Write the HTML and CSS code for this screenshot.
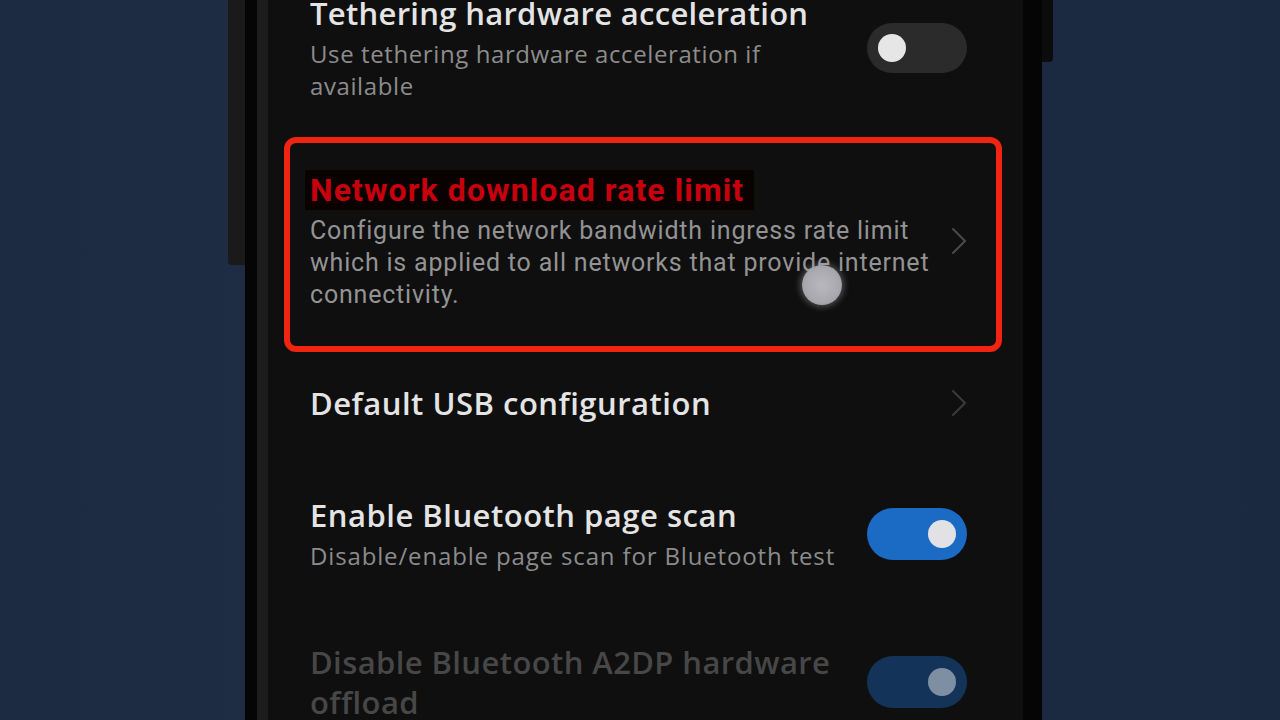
FILE: index.html
```html
<!DOCTYPE html>
<html lang="en">
<head>
  <meta charset="UTF-8">
  <title>Developer options</title>
  <link rel="stylesheet" href="styles.css">
</head>
<body>

  <div class="stage">
    <div class="phone">
      <div class="side-key side-key-left"></div>
      <div class="side-key side-key-right"></div>

      <div class="screen">
        <div class="settings-list">

          <div class="setting-row first">
            <div class="setting-text">
              <div class="setting-title tight">Tethering hardware acceleration</div>
              <div class="setting-summary">Use tethering hardware acceleration if<br>available</div>
            </div>
            <div class="switch"><span class="knob"></span></div>
          </div>

          <div class="highlight-box">
            <div class="setting-row boxed">
              <div class="setting-text">
                <div class="setting-title marked">Network download rate limit</div>
                <div class="setting-summary narrow">Configure the network bandwidth ingress rate limit<br>which is applied to all networks that provide internet<br>connectivity.</div>
              </div>
              <div class="chevron">
                <svg width="16" height="28" viewBox="0 0 16 28"><path d="M2 2 L14 14 L2 26" fill="none" stroke="#4a4a4a" stroke-width="2" stroke-linecap="round" stroke-linejoin="round"/></svg>
              </div>
            </div>
            <div class="touch-dot"></div>
          </div>

          <div class="setting-row usb">
            <div class="setting-text">
              <div class="setting-title">Default USB configuration</div>
            </div>
            <div class="chevron">
              <svg width="16" height="28" viewBox="0 0 16 28"><path d="M2 2 L14 14 L2 26" fill="none" stroke="#3a3a3a" stroke-width="2" stroke-linecap="round" stroke-linejoin="round"/></svg>
            </div>
          </div>

          <div class="setting-row">
            <div class="setting-text">
              <div class="setting-title">Enable Bluetooth page scan</div>
              <div class="setting-summary wide">Disable/enable page scan for Bluetooth test</div>
            </div>
            <div class="switch on"><span class="knob"></span></div>
          </div>

          <div class="setting-row disabled">
            <div class="setting-text">
              <div class="setting-title">Disable Bluetooth A2DP hardware<br>offload</div>
            </div>
            <div class="switch on dim"><span class="knob"></span></div>
          </div>

        </div>
      </div>
    </div>
  </div>

</body>
</html>
```

FILE: styles.css
```css
body {
  margin: 0;
  background: #1d2a40;
  font-family: "Open Sans", Roboto, sans-serif;
  overflow: hidden;
}

.stage {
  height: 720px;
  display: flex;
  padding-left: 245px;
  background: linear-gradient(90deg, #1c2a42 0%, #1f2c44 30%, #1b2940 100%);
}

.phone {
  position: relative;
  width: 797px;
  height: 720px;
  background: #050505;
  padding: 0 19px 0 12px;
  box-sizing: border-box;
}

.side-key {
  position: absolute;
  background: #1a1a1a;
}

.side-key-left {
  left: -17px;
  top: 0;
  width: 17px;
  height: 265px;
  border-radius: 0 0 0 4px;
}

.side-key-right {
  right: -11px;
  top: 0;
  width: 11px;
  height: 62px;
  border-radius: 0 0 4px 0;
  background: #0c0c0c;
}

.screen {
  height: 100%;
  background: #0f0f0f;
  border-left: 11px solid #1c1c1c;
  overflow: hidden;
}

.settings-list {
  margin-top: -42px;
}

.setting-row {
  display: flex;
  align-items: center;
  padding: 35px 56px 35px 42px;
}

.setting-text {
  flex: 1;
}

.setting-title {
  color: #e4e4e4;
  font-size: 31px;
  font-weight: 600;
  line-height: 40px;
  letter-spacing: 0.5px;
}

.setting-title.tight {
  letter-spacing: 0.3px;
}

.setting-summary {
  color: #8c8c8c;
  font-size: 24px;
  line-height: 32px;
  margin-top: 5px;
  letter-spacing: 0.6px;
}

.setting-summary.wide {
  letter-spacing: 0.85px;
}

.setting-row.usb {
  padding-top: 31px;
  padding-bottom: 37px;
}

.setting-row.disabled .setting-title {
  color: #474747;
  letter-spacing: 0.4px;
}

.highlight-box {
  position: relative;
  margin: 0 21px 0 16px;
  border: 6px solid #f02410;
  border-radius: 12px;
}

.setting-row.boxed {
  padding: 27px 29px 35px 20px;
}

.setting-title.marked {
  display: inline-block;
  font-family: Roboto, sans-serif;
  font-weight: 700;
  font-size: 32px;
  letter-spacing: 1.1px;
  color: #c8000e;
  background: #0a0101;
  padding: 0 10px 0 5px;
  margin-left: -5px;
}

.setting-summary.narrow {
  font-family: Roboto, sans-serif;
  font-size: 25px;
  letter-spacing: 0.8px;
  color: #939393;
}

.chevron {
  width: 16px;
  height: 28px;
  margin-left: 16px;
}

.switch {
  position: relative;
  width: 100px;
  height: 50px;
  border-radius: 25px;
  background: #2b2b2b;
  margin-left: 30px;
  flex-shrink: 0;
}

.knob {
  position: absolute;
  left: 11px;
  top: 11px;
  width: 28px;
  height: 28px;
  border-radius: 50%;
  background: #e6e6e6;
}

.switch.on {
  background: #1b6ac4;
  height: 52px;
  border-radius: 26px;
}

.switch.on .knob {
  left: auto;
  right: 11px;
  top: 12px;
  background: #e2e2e6;
}

.switch.dim {
  background: #143359;
}

.switch.dim .knob {
  background: #7f8fa3;
}

.touch-dot {
  position: absolute;
  left: 512px;
  top: 122px;
  width: 40px;
  height: 40px;
  border-radius: 50%;
  background: radial-gradient(circle, #b8b8be 0%, #a8a8ae 60%, #8c8c92 100%);
  box-shadow: 0 0 6px 2px rgba(200, 200, 210, 0.35);
}
```
